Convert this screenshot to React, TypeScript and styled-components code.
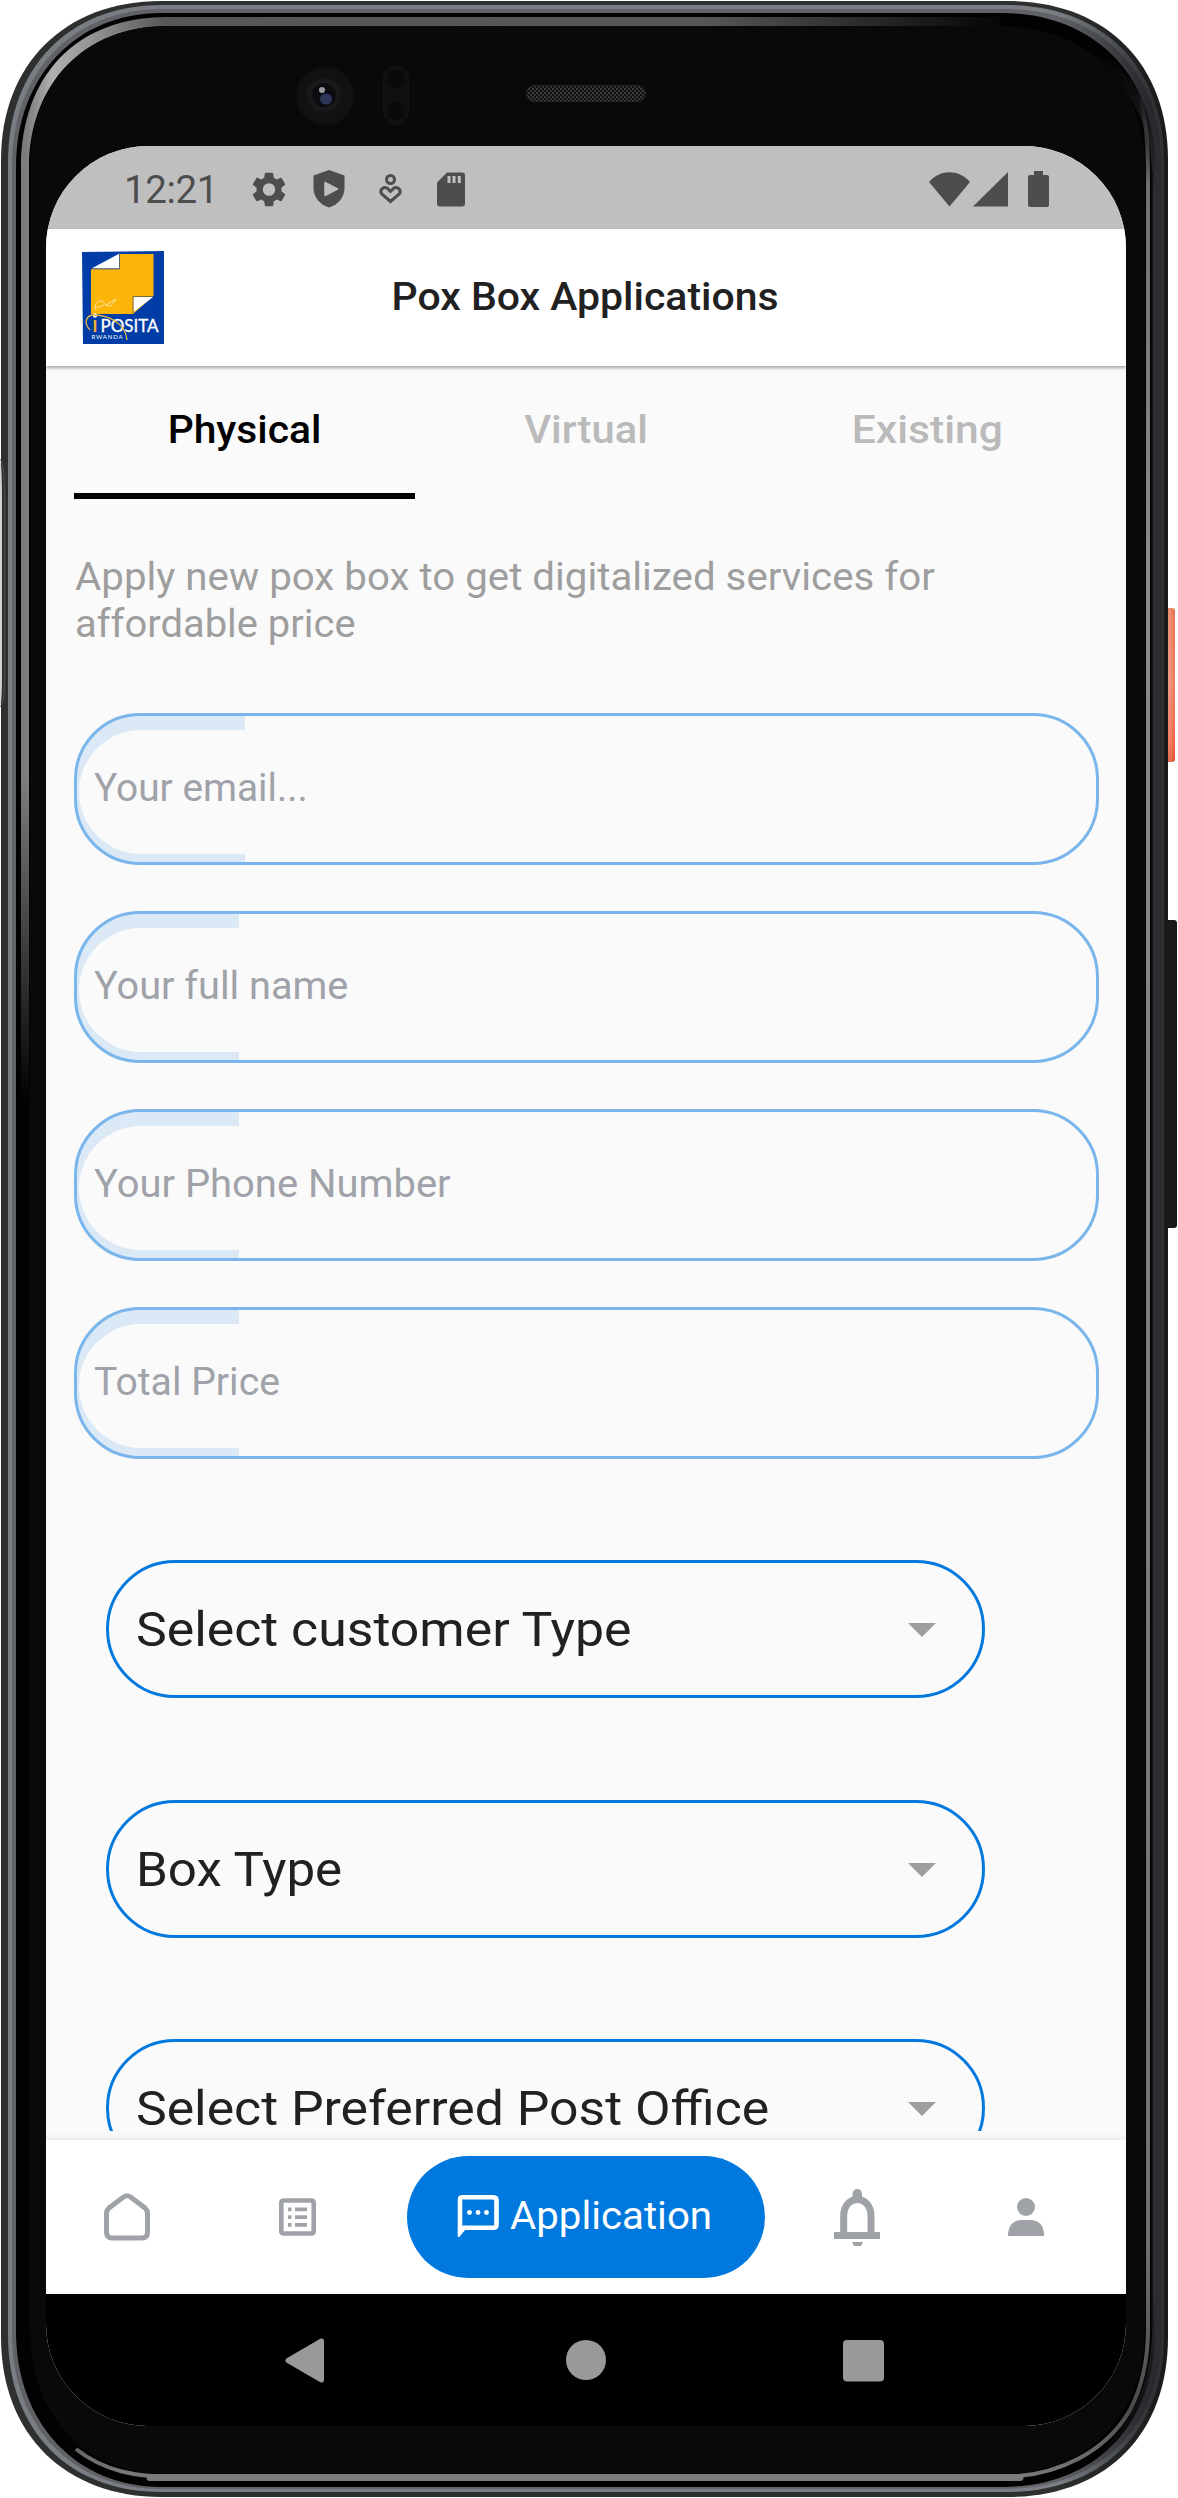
import React from "react";
import styled, { createGlobalStyle } from "styled-components";

const GlobalStyle = createGlobalStyle`
  *, *::before, *::after { box-sizing: border-box; }
  html, body { margin: 0; padding: 0; background: #fff; }
  body { font-family: Roboto, "Liberation Sans", sans-serif; }
`;

const Stage = styled.div`
  position: relative;
  width: 1178px;
  height: 2498px;
  overflow: hidden;
  padding: 146px 52px 72px 46px;
`;

const DeviceArt = styled.svg`
  position: absolute;
  inset: 0;
  display: block;
`;

const Screen = styled.div`
  position: relative;
  width: 1080px;
  height: 2280px;
  border-radius: 102px;
  overflow: hidden;
  display: flex;
  flex-direction: column;
  background: #fafafa;
`;

const Label = styled.span<{ $stretch?: number; $origin?: string }>`
  display: inline-block;
  white-space: nowrap;
  transform: scaleX(${(p) => p.$stretch ?? 1});
  transform-origin: ${(p) => p.$origin ?? "left"} center;
`;

const StatusBar = styled.header`
  flex: none;
  height: 83px;
  background: #bfbfbf;
  color: #4d4d4d;
  display: flex;
  align-items: center;
  justify-content: space-between;
  padding: 3px 77px 0 78px;
`;

const StatusGroup = styled.div`
  display: flex;
  align-items: center;
  height: 40px;
`;

const Clock = styled.time`
  width: 93px;
  margin-right: 35px;
  padding-top: 1px;
  font-size: 38.5px;
  line-height: 40px;
  white-space: nowrap;
  letter-spacing: -0.4px;
`;

const Glyph = styled.svg<{ $ml?: number }>`
  display: block;
  flex: none;
  margin-left: ${(p) => p.$ml ?? 0}px;
`;

const AppBar = styled.div`
  flex: none;
  position: relative;
  z-index: 1;
  height: 137px;
  background: #fff;
  box-shadow: 0 2px 3px rgba(0, 0, 0, 0.35);
  display: grid;
  grid-template-columns: 118px 1fr 120px;
  align-items: center;
`;

const Logo = styled.svg`
  display: block;
  margin-left: 36px;
`;

const Title = styled.h1`
  margin: 0;
  padding-bottom: 1px;
  text-align: center;
  font-size: 38.5px;
  line-height: 46px;
  font-weight: 500;
  color: #212121;
`;

const Content = styled.main`
  flex: none;
  height: 1774px;
  padding: 0 27px 0 28px;
  overflow: hidden;
`;

const Tabs = styled.nav`
  display: grid;
  grid-template-columns: repeat(3, 1fr);
  width: 1024px;
  height: 133px;
`;

const Tab = styled.button<{ $active?: boolean }>`
  appearance: none;
  border: 0;
  border-bottom: 6px solid ${(p) => (p.$active ? "#000" : "transparent")};
  background: none;
  padding: 0;
  font: 500 38.5px/46px Roboto, sans-serif;
  color: ${(p) => (p.$active ? "#000" : "#bababa")};
`;

const Intro = styled.p`
  margin: 55px 0 0 1px;
  color: #9e9e9e;
  font-size: 38.5px;
  line-height: 46.6px;
  display: flex;
  flex-direction: column;
  align-items: flex-start;
`;

const Fields = styled.div`
  margin-top: 66px;
  display: flex;
  flex-direction: column;
  gap: 46px;
`;

const Field = styled.label<{ $tint: number }>`
  display: flex;
  width: 1025px;
  height: 152px;
  padding: 14px 0 8px 2px;
  border: 3px solid #7ab6eb;
  border-radius: 66px;
  background: linear-gradient(
    to right,
    #dbe9f7 ${(p) => p.$tint}px,
    #fafafa ${(p) => p.$tint}px
  );
`;

const FieldInner = styled.span`
  flex: 1;
  display: flex;
  align-items: center;
  padding: 0 15px 8px;
  border-radius: 62px;
  background: #fafafa;
  color: #9fa2a8;
  font-size: 38.5px;
  line-height: 46px;
`;

const Selects = styled.div`
  margin: 101px 0 0 32px;
  display: flex;
  flex-direction: column;
  gap: 101.5px;
`;

const Select = styled.div`
  flex: none;
  width: 879px;
  height: 138px;
  border: 3px solid #0078dd;
  border-radius: 69px;
  padding: 2px 46px 0 27px;
  display: flex;
  align-items: center;
  justify-content: space-between;
  color: #212121;
  font-size: 48.6px;
  line-height: 42px;
`;

const BottomShade = styled.div`
  flex: none;
  position: relative;
  height: 9px;
  margin-top: -9px;
  background: linear-gradient(#fafafa 30%, #ededed);
`;

const BottomNav = styled.nav`
  flex: none;
  height: 154px;
  background: #fff;
  color: #9fa3a8;
  display: flex;
  align-items: center;
`;

const NavItem = styled.span<{ $w: number }>`
  display: flex;
  justify-content: center;
  width: ${(p) => p.$w}px;
`;

const NavPill = styled.button`
  appearance: none;
  border: 0;
  width: 358px;
  height: 122px;
  border-radius: 61px;
  background: #0078dd;
  color: #fff;
  padding: 0 0 2px 47px;
  display: flex;
  align-items: center;
  gap: 10px;
  font: 400 38.5px/46px Roboto, sans-serif;
`;

const SystemNav = styled.footer`
  flex: none;
  height: 132px;
  background: #000;
  display: flex;
  padding: 44px 0 0 239px;
`;

function Device() {
  return (
    <DeviceArt width="1178" height="2498" viewBox="0 0 1178 2498" aria-hidden="true">
      <defs>
        <linearGradient id="shell" x1="0" y1="0" x2="1178" y2="0" gradientUnits="userSpaceOnUse">
          <stop offset="0.9" stopColor="#2e302f" />
          <stop offset="0.99" stopColor="#191a1a" />
        </linearGradient>
        <linearGradient id="rimOuter" x1="0" y1="0" x2="1178" y2="0" gradientUnits="userSpaceOnUse">
          <stop offset="0.9" stopColor="#7a7d83" />
          <stop offset="0.975" stopColor="#303236" />
        </linearGradient>
        <linearGradient id="rimInner" x1="0" y1="0" x2="1178" y2="0" gradientUnits="userSpaceOnUse">
          <stop offset="0.9" stopColor="#606267" />
          <stop offset="0.975" stopColor="#26282b" />
        </linearGradient>
        <linearGradient id="inner" x1="0" y1="0" x2="1178" y2="0" gradientUnits="userSpaceOnUse">
          <stop offset="0.022" stopColor="#7c7c7c" />
          <stop offset="0.045" stopColor="#b0b0b0" />
          <stop offset="0.075" stopColor="#969696" />
          <stop offset="0.14" stopColor="#585858" />
          <stop offset="0.6" stopColor="#565656" />
          <stop offset="0.86" stopColor="#020203" />
        </linearGradient>
        <linearGradient id="leftFade" x1="0" y1="780" x2="0" y2="1100" gradientUnits="userSpaceOnUse">
          <stop offset="0" stopColor="#020203" stopOpacity="0" />
          <stop offset="1" stopColor="#020203" />
        </linearGradient>
        <linearGradient id="sideBand" x1="0" y1="50" x2="0" y2="2460" gradientUnits="userSpaceOnUse">
          <stop offset="0" stopColor="#2b2d31" stopOpacity="0" />
          <stop offset="0.06" stopColor="#2b2d31" />
          <stop offset="0.93" stopColor="#2b2d31" />
          <stop offset="1" stopColor="#2b2d31" stopOpacity="0" />
        </linearGradient>
        <linearGradient id="rightBand" x1="0" y1="90" x2="0" y2="2480" gradientUnits="userSpaceOnUse">
          <stop offset="0" stopColor="#555" stopOpacity="0" />
          <stop offset="0.04" stopColor="#707070" />
          <stop offset="0.2" stopColor="#898a89" />
          <stop offset="0.9" stopColor="#707070" />
          <stop offset="0.97" stopColor="#4a4a4a" />
          <stop offset="1" stopColor="#7b7b7b" />
        </linearGradient>
        <linearGradient id="orange" x1="0" y1="0" x2="0" y2="1">
          <stop offset="0" stopColor="#e9805f" />
          <stop offset="0.5" stopColor="#f08a70" />
          <stop offset="0.9" stopColor="#f0694d" />
          <stop offset="1" stopColor="#d95436" />
        </linearGradient>
        <linearGradient id="orangeEdge" x1="0" y1="0" x2="1" y2="0">
          <stop offset="0" stopColor="#b33c20" stopOpacity="0.5" />
          <stop offset="0.3" stopColor="#fff" stopOpacity="0.12" />
          <stop offset="1" stopColor="#e23e16" stopOpacity="0.3" />
        </linearGradient>
        <radialGradient id="lens" cx="0.5" cy="0.5" r="0.5">
          <stop offset="0" stopColor="#0a0a12" />
          <stop offset="0.6" stopColor="#0c0c10" />
          <stop offset="0.75" stopColor="#1b1b1d" />
          <stop offset="1" stopColor="#141415" />
        </radialGradient>
        <pattern id="mesh" width="4" height="4" patternUnits="userSpaceOnUse">
          <rect width="4" height="4" fill="#111" />
          <rect width="2" height="2" fill="#3c3c3c" />
          <rect x="2" y="2" width="2" height="2" fill="#333" />
        </pattern>
      </defs>

      <rect x="1165" y="608" width="10" height="154" rx="3" fill="url(#orange)" />
      <rect x="1165" y="608" width="10" height="154" rx="3" fill="url(#orangeEdge)" />
      <rect x="1165" y="920" width="12" height="308" rx="3" fill="#191919" />

      <path d="M161 1H1008C1104 1 1168 62 1168 160V2337C1168 2436 1104 2497 1008 2497H161C67 2497 1 2436 1 2337V160C1 64 65 1 161 1Z" fill="url(#shell)" />
      <path d="M161 5H1006C1101 5 1164 65 1164 162V2335C1164 2432 1102 2492 1006 2492H161C69 2492 8 2431 8 2335V162C8 68 69 5 161 5Z" fill="url(#rimOuter)" />
      <path d="M161 9H1004C1098 9 1161 68 1161 164V2333C1161 2428 1099 2489 1004 2489H161C73 2489 12 2428 12 2333V164C12 72 73 9 161 9Z" fill="url(#rimInner)" />
      <path d="M161 13H1002C1092 13 1155 74 1155 166V2331C1155 2424 1096 2487 1002 2487H161C77 2487 16 2424 16 2331V166C16 76 77 13 161 13Z" fill="#020203" />
      <path d="M1095 52C1135 84 1157.500 125 1157.500 176V2329C1157.500 2385 1135 2430 1100 2458" fill="none" stroke="url(#sideBand)" strokeWidth="11" />
      <path d="M1152 170V2330" stroke="#0c0c0d" strokeWidth="1.500" />
      <path d="M1000 17H167C76 17 21 76 21 168V1110H29V168C29 84 84 26 167 26H1000Z" fill="url(#inner)" />
      <rect x="19" y="780" width="11" height="340" fill="url(#leftFade)" />
      <path d="M167 26H1000C1088 26 1145 84 1145 168V2329C1145 2415 1088 2474 1000 2474H167C84 2474 30 2415 30 2329V168C30 84 84 26 167 26Z" fill="#09090b" />
      <path d="M76 2449C104 2471 135 2477 175 2477H1000C1060 2477 1107 2450 1130 2410C1143 2385 1148 2360 1148 2329V176C1148 144 1146 118 1140 97" fill="none" stroke="url(#rightBand)" strokeWidth="4" />
      <path d="M150 2477.500H1020" stroke="#7b7b7b" strokeWidth="7" strokeLinecap="round" />

      <path d="M0 459C1.500 463 2 480 2 500V675C2 693 1.500 702 0 707Z" fill="#d0d3d1" />
      <path d="M0 459C4 463 4.500 480 4.500 500V675C4.500 693 4 702 0 707" fill="none" stroke="#555956" strokeWidth=".8" />

      <circle cx="325" cy="96" r="29" fill="#111112" />
      <circle cx="324" cy="95" r="18" fill="url(#lens)" />
      <ellipse cx="326" cy="99" rx="6" ry="5.5" fill="#2b3658" />
      <circle cx="322" cy="90" r="3" fill="#9a9a9f" />
      <rect x="383.500" y="66.500" width="25" height="58" rx="12.500" fill="#0f0f10" stroke="#151516" />
      <circle cx="396" cy="79" r="10" fill="#0a0a0b" stroke="#131314" />
      <circle cx="396" cy="111" r="10" fill="#0a0a0b" stroke="#131314" />
      <rect x="526.500" y="85.500" width="119" height="16" rx="8" fill="url(#mesh)" stroke="#242424" />
    </DeviceArt>
  );
}

function BrandLogo() {
  return (
    <Logo width="82" height="94" viewBox="0 0 82 94" aria-label="iPosita Rwanda">
      <path d="M0 1L82 0V93L1 93Z" fill="#003da6" />
      <path d="M9 18H38V3H71.500V45L51 63H9Z" fill="#fdb50a" />
      <path d="M9.500 17.500L37.500 2.500V17.500Z" fill="#fff" />
      <path d="M51.500 46H71L51.500 61Z" fill="#fff" />
      <path d="M37.500 2.500V18H9M51 62V45.500H71" fill="none" stroke="#5b5a45" strokeWidth=".8" />
      <path d="M14 59C11 53 18 47 21 51C26 52 19 57 14 56M24 54L34 48L29 55L23 54" fill="none" stroke="#f9e3a0" strokeWidth="1" />
      <text x="10.500" y="80.500" fontFamily="Lato, sans-serif" fontWeight="900" fontSize="16" fill="#f0ae30">I</text>
      <circle cx="13" cy="64.500" r="2.200" fill="#fff" />
      <text x="18.500" y="80.500" fontFamily="Lato, sans-serif" fontWeight="400" fontSize="17" textLength="58" stroke="#fff" strokeWidth=".3" fill="#fff">POSITA</text>
      <text x="9.500" y="87.500" fontFamily="Lato, sans-serif" fontSize="6" textLength="31" fill="#fff">RWANDA</text>
      <path d="M8 79C2 73 3 64 12 64C27 64 44 73 45 89" fill="none" stroke="#e8b54d" strokeWidth="1.300" />
    </Logo>
  );
}

function Caret() {
  return (
    <Glyph width="28" height="14" viewBox="0 0 28 14">
      <path d="M0 0H28L14 14Z" fill="#9e9e9e" />
    </Glyph>
  );
}

const tabs = [
  { label: "Physical", stretch: 1.06, active: true },
  { label: "Virtual", stretch: 1.085 },
  { label: "Existing", stretch: 1.105 },
];

const fields = [
  { label: "Your email...", stretch: 1.008, tint: 168 },
  { label: "Your full name", stretch: 1.03, tint: 162 },
  { label: "Your Phone Number", stretch: 1.037, tint: 162 },
  { label: "Total Price", stretch: 1.017, tint: 162 },
];

const selects = [
  { label: "Select customer Type", stretch: 1.065 },
  { label: "Box Type", stretch: 1.052 },
  { label: "Select Preferred Post Office", stretch: 1.064 },
];

export default function App() {
  return (
    <>
      <GlobalStyle />
      <Stage>
        <Device />
        <Screen>
          <StatusBar>
            <StatusGroup>
              <Clock>12:21</Clock>
              <Glyph width="34" height="35" viewBox="2.200 2 19.600 20" preserveAspectRatio="none" fill="currentColor">
                <path d="M19.140 12.940c.04-.3.060-.61.060-.94 0-.32-.02-.64-.07-.94l2.030-1.580c.18-.14.230-.41.120-.61l-1.920-3.320c-.12-.22-.37-.29-.59-.22l-2.390.96c-.5-.38-1.030-.7-1.620-.94L14.400 2.810c-.04-.24-.24-.41-.48-.41h-3.840c-.24 0-.43.170-.47.410L9.250 5.350C8.660 5.590 8.120 5.920 7.630 6.290L5.240 5.330c-.22-.08-.47 0-.59.220L2.740 8.870c-.12.210-.08.470.120.610l2.030 1.580c-.05.300-.09.630-.09.940s.02.640.070.940l-2.030 1.580c-.18.140-.23.410-.12.610l1.920 3.320c.12.220.37.290.59.220l2.390-.96c.5.380 1.030.7 1.620.94l.36 2.540c.05.240.24.410.48.410h3.840c.24 0 .44-.17.470-.41l.36-2.540c.59-.24 1.130-.56 1.620-.94l2.390.96c.22.080.47 0 .59-.22l1.920-3.320c.12-.22.070-.47-.12-.61l-2.010-1.580zM12 15.600A3.600 3.600 0 1 1 12 8.400a3.600 3.600 0 0 1 0 7.200z" />
              </Glyph>
              <Glyph $ml={27} width="32" height="38" viewBox="0 0 32 38">
                <path d="M16 0L31.500 5.500V18C31.500 27 25 35 16 37.500C7 35 .5 27 .5 18V5.500Z" fill="currentColor" />
                <path d="M12 12.500L24.500 19L12 25.500Z" fill="#bfbfbf" stroke="#bfbfbf" strokeWidth="1.500" strokeLinejoin="round" />
              </Glyph>
              <Glyph $ml={34} width="23" height="30" viewBox="0 0 23 30" fill="none" stroke="currentColor" strokeWidth="3">
                <circle cx="11.500" cy="5.500" r="4" />
                <path d="M11.500 27.500L3.300 20.500C-.5 16.500 4.500 11.500 8.500 14.500L11.500 17.500L14.500 14.500C18.500 11.500 23.500 16.500 19.700 20.500Z" />
              </Glyph>
              <Glyph $ml={35} width="28" height="35" viewBox="0 0 28 35">
                <path d="M10 .5H25Q28 .5 28 3.500V31.500Q28 34.500 25 34.500H3Q0 34.500 0 31.500V10.500Z" fill="currentColor" />
                <path d="M10.500 4H13.500V11H10.500ZM15.500 4H18.500V11H15.500ZM20.800 4H23.800V11H20.800Z" fill="#bfbfbf" />
              </Glyph>
            </StatusGroup>
            <StatusGroup>
              <Glyph width="41" height="35" viewBox="0 0 41 35">
                <path d="M0 10C11-3 30-3 41 10L20.500 34.500Z" fill="currentColor" />
              </Glyph>
              <Glyph $ml={3} width="35" height="35" viewBox="0 0 35 35">
                <path d="M35 0V34.500H0Z" fill="currentColor" />
              </Glyph>
              <Glyph $ml={20} width="21" height="36" viewBox="0 0 21 36">
                <path d="M6 0H15V4H19Q21 4 21 6V34Q21 36 19 36H2Q0 36 0 34V6Q0 4 2 4H6Z" fill="currentColor" />
              </Glyph>
            </StatusGroup>
          </StatusBar>

          <AppBar>
            <BrandLogo />
            <Title>
              <Label $stretch={1.063} $origin="center">
                Pox Box Applications
              </Label>
            </Title>
          </AppBar>

          <Content>
            <Tabs>
              {tabs.map((t) => (
                <Tab key={t.label} $active={t.active}>
                  <Label $stretch={t.stretch} $origin="center">
                    {t.label}
                  </Label>
                </Tab>
              ))}
            </Tabs>
            <Intro>
              <Label $stretch={1.046}>Apply new pox box to get digitalized services for</Label>
              <Label $stretch={1.037}>affordable price</Label>
            </Intro>
            <Fields>
              {fields.map((f) => (
                <Field key={f.label} $tint={f.tint}>
                  <FieldInner>
                    <Label $stretch={f.stretch}>{f.label}</Label>
                  </FieldInner>
                </Field>
              ))}
            </Fields>
            <Selects>
              {selects.map((s) => (
                <Select key={s.label}>
                  <Label $stretch={s.stretch}>{s.label}</Label>
                  <Caret />
                </Select>
              ))}
            </Selects>
          </Content>

          <BottomShade />
          <BottomNav>
            <NavItem $w={162}>
              <Glyph width="46" height="48" viewBox="0 0 46 48" fill="none" stroke="currentColor" strokeWidth="5">
                <path d="M2.500 20Q2.500 17.500 5 15L19.500 4Q23 1.500 26.500 4L41 15Q43.500 17.500 43.500 20V39Q43.500 45 38 45H8Q2.500 45 2.500 39Z" />
              </Glyph>
            </NavItem>
            <NavItem $w={179}>
              <Glyph width="37" height="38" viewBox="0 0 37 38">
                <rect x="2.300" y="2.500" width="32.400" height="33" rx="2" fill="none" stroke="currentColor" strokeWidth="4.600" />
                <path d="M9 9.500H12.500V13.300H9ZM9 17.300H12.500V21.100H9ZM9 25H12.500V28.800H9ZM16 9.500H28V13.300H16ZM16 17.300H28V21.100H16ZM16 25H28V28.800H16Z" fill="currentColor" />
              </Glyph>
            </NavItem>
            <NavItem $w={398}>
              <NavPill>
                <Glyph width="46" height="42" viewBox="0 0 46 42">
                  <path d="M7.500 2.300H38.500Q42.500 2.300 42.500 5V30Q42.500 32.800 39.500 32.800H10L6 37.500V5Q6 2.300 8 2.300Z" fill="none" stroke="currentColor" strokeWidth="4.600" />
                  <circle cx="15.500" cy="17.500" r="2.400" fill="currentColor" />
                  <circle cx="24" cy="17.500" r="2.400" fill="currentColor" />
                  <circle cx="32.500" cy="17.500" r="2.400" fill="currentColor" />
                </Glyph>
                <Label $stretch={1.045}>Application</Label>
              </NavPill>
            </NavItem>
            <NavItem $w={143}>
              <Glyph width="46" height="57" viewBox="0 0 46 57">
                <path d="M9.700 45V27C9.700 5 37 5 37 27V45" fill="none" stroke="currentColor" strokeWidth="7" />
                <path d="M0 43H46V50H0ZM18.500 10V5Q19 0 23.200 0Q27.500 0 28 5V10ZM18 53H29L27 57H20Z" fill="currentColor" />
              </Glyph>
            </NavItem>
            <NavItem $w={196}>
              <Glyph width="36" height="38" viewBox="0 0 36 38" fill="currentColor">
                <circle cx="18" cy="9" r="9" />
                <path d="M0 38V36Q1 22 14 22H22Q35 22 36 36V38Z" />
              </Glyph>
            </NavItem>
          </BottomNav>

          <SystemNav>
            <Glyph width="39" height="45" viewBox="0 0 39 45">
              <path d="M3 22.500L36.500 3V42Z" fill="#999" stroke="#999" strokeWidth="5" strokeLinejoin="round" />
            </Glyph>
            <Glyph $ml={242} width="40" height="44" viewBox="0 0 40 44">
              <circle cx="20" cy="22" r="20" fill="#999" />
            </Glyph>
            <Glyph $ml={237} width="41" height="45" viewBox="0 0 41 45">
              <rect y="2" width="41" height="41.500" rx="4" fill="#999" />
            </Glyph>
          </SystemNav>
        </Screen>
      </Stage>
    </>
  );
}
